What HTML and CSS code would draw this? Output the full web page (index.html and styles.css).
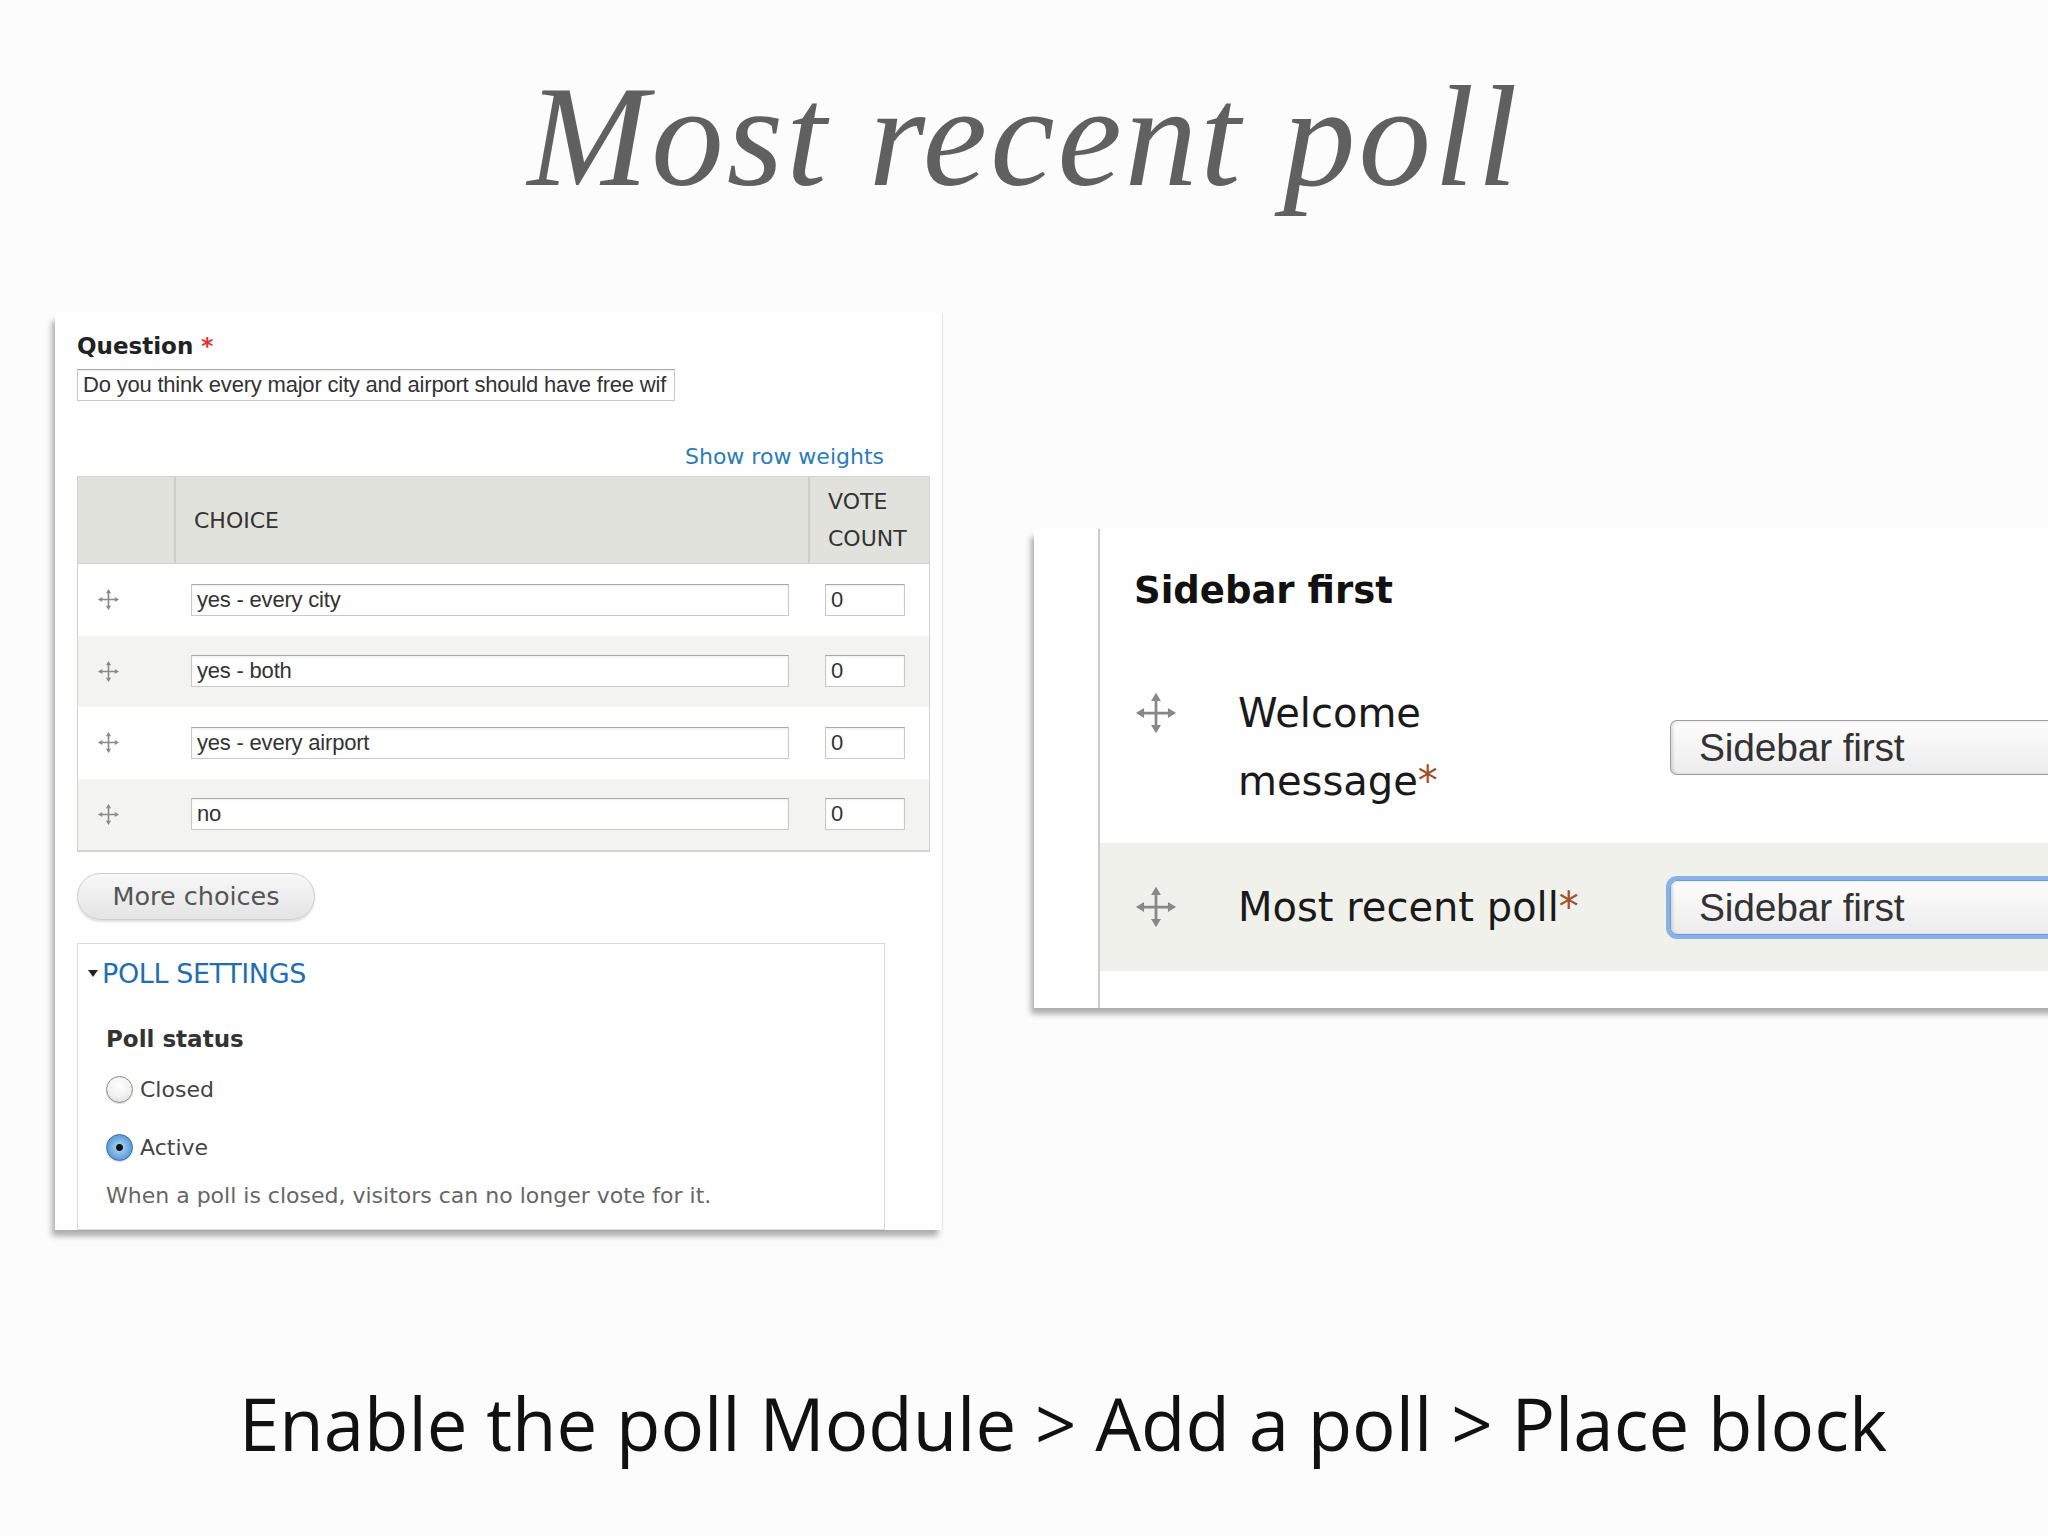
FILE: index.html
```html
<!DOCTYPE html>
<html lang="en">
<head>
<meta charset="utf-8">
<title>Most recent poll</title>
<link rel="stylesheet" href="styles.css">
</head>
<body>
<div class="slide">
  <h1 class="title">Most recent poll</h1>

  <div class="stage">
    <section class="poll-form">
      <div class="field">
        <div class="field-label">Question <span class="req">*</span></div>
        <div class="text-input question-input">Do you think every major city and airport should have free wif</div>
      </div>

      <div class="weights-link">Show row weights</div>

      <div class="choices">
        <div class="choices-head">
          <div class="head-cell"></div>
          <div class="head-cell choice-head">CHOICE</div>
          <div class="head-cell vote-head">VOTE<br>COUNT</div>
        </div>
        <div class="choice-row">
          <div class="drag-cell"><svg class="drag-icon" viewBox="0 0 24 24"><path d="M12 4v16M4 12h16"/><polygon points="12,1 9.3,5.5 14.7,5.5"/><polygon points="12,23 9.3,18.5 14.7,18.5"/><polygon points="1,12 5.5,9.3 5.5,14.7"/><polygon points="23,12 18.5,9.3 18.5,14.7"/></svg></div>
          <div class="choice-cell"><div class="text-input choice-input">yes - every city</div></div>
          <div class="vote-cell"><div class="text-input vote-input">0</div></div>
        </div>
        <div class="choice-row alt">
          <div class="drag-cell"><svg class="drag-icon" viewBox="0 0 24 24"><path d="M12 4v16M4 12h16"/><polygon points="12,1 9.3,5.5 14.7,5.5"/><polygon points="12,23 9.3,18.5 14.7,18.5"/><polygon points="1,12 5.5,9.3 5.5,14.7"/><polygon points="23,12 18.5,9.3 18.5,14.7"/></svg></div>
          <div class="choice-cell"><div class="text-input choice-input">yes - both</div></div>
          <div class="vote-cell"><div class="text-input vote-input">0</div></div>
        </div>
        <div class="choice-row">
          <div class="drag-cell"><svg class="drag-icon" viewBox="0 0 24 24"><path d="M12 4v16M4 12h16"/><polygon points="12,1 9.3,5.5 14.7,5.5"/><polygon points="12,23 9.3,18.5 14.7,18.5"/><polygon points="1,12 5.5,9.3 5.5,14.7"/><polygon points="23,12 18.5,9.3 18.5,14.7"/></svg></div>
          <div class="choice-cell"><div class="text-input choice-input">yes - every airport</div></div>
          <div class="vote-cell"><div class="text-input vote-input">0</div></div>
        </div>
        <div class="choice-row alt">
          <div class="drag-cell"><svg class="drag-icon" viewBox="0 0 24 24"><path d="M12 4v16M4 12h16"/><polygon points="12,1 9.3,5.5 14.7,5.5"/><polygon points="12,23 9.3,18.5 14.7,18.5"/><polygon points="1,12 5.5,9.3 5.5,14.7"/><polygon points="23,12 18.5,9.3 18.5,14.7"/></svg></div>
          <div class="choice-cell"><div class="text-input choice-input">no</div></div>
          <div class="vote-cell"><div class="text-input vote-input">0</div></div>
        </div>
      </div>

      <div class="more-btn">More choices</div>

      <div class="settings">
        <div class="settings-legend"><span class="caret"></span>POLL SETTINGS</div>
        <div class="settings-body">
          <div class="status-label">Poll status</div>
          <div class="radio-line"><span class="radio"></span>Closed</div>
          <div class="radio-line"><span class="radio checked"></span>Active</div>
          <div class="description">When a poll is closed, visitors can no longer vote for it.</div>
        </div>
      </div>
    </section>

    <section class="blocks">
      <div class="blocks-gutter"></div>
      <div class="blocks-main">
        <div class="region-title">Sidebar first</div>
        <div class="block-row welcome-row">
          <div class="block-name">
            <svg class="drag-icon big" viewBox="0 0 24 24"><path d="M12 4v16M4 12h16"/><polygon points="12,1 9.3,5.5 14.7,5.5"/><polygon points="12,23 9.3,18.5 14.7,18.5"/><polygon points="1,12 5.5,9.3 5.5,14.7"/><polygon points="23,12 18.5,9.3 18.5,14.7"/></svg>
            <span class="block-label">Welcome message<span class="star">*</span></span>
          </div>
          <div class="select">Sidebar first</div>
        </div>
        <div class="block-row poll-row">
          <div class="block-name">
            <svg class="drag-icon big" viewBox="0 0 24 24"><path d="M12 4v16M4 12h16"/><polygon points="12,1 9.3,5.5 14.7,5.5"/><polygon points="12,23 9.3,18.5 14.7,18.5"/><polygon points="1,12 5.5,9.3 5.5,14.7"/><polygon points="23,12 18.5,9.3 18.5,14.7"/></svg>
            <span class="block-label">Most recent poll<span class="star">*</span></span>
          </div>
          <div class="select focused">Sidebar first</div>
        </div>
      </div>
    </section>
  </div>

  <p class="caption">Enable the poll Module &gt; Add a poll &gt; Place block</p>
</div>
</body>
</html>
```

FILE: styles.css
```css
* { box-sizing: border-box; }

html, body {
  margin: 0;
  padding: 0;
}

body {
  width: 2048px;
  height: 1536px;
  overflow: hidden;
  background: #fcfcfc;
}

.slide {
  display: flex;
  flex-direction: column;
  width: 2048px;
  height: 1536px;
}

.title {
  margin: 0;
  padding-top: 64px;
  font-family: "Liberation Serif", "Times New Roman", serif;
  font-style: italic;
  font-weight: normal;
  font-size: 145px;
  line-height: 145px;
  letter-spacing: 3px;
  color: #606060;
  text-align: center;
}

.stage {
  display: flex;
  align-items: flex-start;
  margin-top: 104px;
  padding-left: 55px;
  height: 917px;
}

/* ---------- left panel: poll form ---------- */
.poll-form {
  flex: 0 0 888px;
  height: 917px;
  overflow: hidden;
  display: flex;
  flex-direction: column;
  padding: 21px 13px 0 22px;
  background: #fefefe;
  border-right: 1px solid #e6e6e6;
  box-shadow: -4px 7px 6px -1px rgba(0, 0, 0, 0.32);
  font-family: "DejaVu Sans", "Liberation Sans", sans-serif;
  color: #333;
}

.field {
  display: flex;
  flex-direction: column;
  gap: 11px;
}

.field-label {
  font-weight: bold;
  font-size: 23px;
  line-height: 24px;
  color: #222;
}

.req { color: #d33; }

.text-input {
  background: #fff;
  border: 1px solid #c9c9c9;
  border-top-color: #a9a9a9;
  box-shadow: inset 0 1px 2px rgba(0, 0, 0, 0.08);
  font-family: "Liberation Sans", Arial, sans-serif;
  font-size: 22px;
  letter-spacing: -0.2px;
  color: #333;
  padding: 0 5px;
  white-space: nowrap;
  overflow: hidden;
}

.question-input {
  width: 598px;
  height: 32px;
  line-height: 30px;
}

.weights-link {
  align-self: flex-end;
  margin: 44px 45px 7px 0;
  font-size: 22px;
  line-height: 24px;
  color: #2a7cb8;
}

.choices {
  width: 853px;
  border: 1px solid #d2d3cd;
  border-bottom-width: 2px;
}

.choices-head,
.choice-row {
  display: grid;
  grid-template-columns: 96px 634px 1fr;
}

.choices-head {
  height: 87px;
  background: #e1e2dc;
  border-bottom: 1px solid #d2d3cd;
  font-size: 22px;
  color: #333;
}

.head-cell {
  display: flex;
  align-items: center;
  padding-left: 18px;
}

.head-cell + .head-cell { border-left: 2px solid #cecfc9; }

.vote-head {
  line-height: 37px;
  padding-left: 18px;
}

.choice-row {
  height: 71.5px;
  background: #fff;
}

.choice-row.alt { background: #f3f4ef; }

.drag-cell,
.choice-cell,
.vote-cell {
  display: flex;
  align-items: center;
}

.drag-cell { padding-left: 19px; }

.choice-cell { padding-left: 17px; }
.vote-cell { padding-left: 17px; }

.choice-input,
.vote-input {
  height: 32px;
  line-height: 30px;
}

.choice-input { width: 598px; }
.vote-input { width: 80px; }

.drag-icon {
  width: 23px;
  height: 23px;
  fill: #8a8a8a;
  stroke: #8a8a8a;
  stroke-width: 1.7;
}

.drag-icon polygon { stroke: none; }

.drag-icon.big {
  width: 44px;
  height: 44px;
  stroke-width: 1.5;
  fill: #888;
  stroke: #888;
}

.more-btn {
  align-self: flex-start;
  margin-top: 21px;
  height: 47px;
  width: 238px;
  border: 1px solid #cdcdcd;
  border-radius: 24px;
  background: linear-gradient(#f8f8f8, #e4e4e4);
  box-shadow: 0 2px 2px rgba(0, 0, 0, 0.12);
  font-size: 25.5px;
  line-height: 45px;
  color: #555;
  text-align: center;
}

.settings {
  margin-top: 23px;
  width: 808px;
  height: 320px;
  border: 1px solid #dadada;
  background: #fff;
}

.settings-legend {
  display: flex;
  align-items: center;
  height: 58px;
  padding-left: 10px;
  font-size: 27px;
  color: #1f6fb0;
  letter-spacing: -0.4px;
}

.caret {
  width: 0;
  height: 0;
  border-left: 5px solid transparent;
  border-right: 5px solid transparent;
  border-top: 7px solid #222;
  margin-right: 4px;
}

.settings-body {
  display: flex;
  flex-direction: column;
  padding: 22px 0 0 28px;
}

.status-label {
  font-weight: bold;
  font-size: 23px;
  line-height: 30px;
  color: #333;
}

.radio-line {
  display: flex;
  align-items: center;
  gap: 7px;
  font-size: 22px;
  color: #444;
  height: 30px;
}

.status-label + .radio-line { margin-top: 20px; }
.radio-line + .radio-line { margin-top: 28px; }

.radio {
  width: 27px;
  height: 27px;
  border-radius: 50%;
  border: 1px solid #8a8a8a;
  background: radial-gradient(circle at 50% 35%, #ffffff 0%, #f1f1f1 55%, #cfcfcf 100%);
  box-shadow: 0 1px 1px rgba(0, 0, 0, 0.15);
}

.radio.checked {
  border-color: #3a6fa8;
  background: radial-gradient(circle, #111 0 3px, #9cc9f0 4px, #5a9ad8 70%, #3b78bf 100%);
}

.description {
  margin-top: 21px;
  font-size: 22px;
  line-height: 26px;
  color: #666;
}

/* ---------- right panel: block layout ---------- */
.blocks {
  flex: 0 0 1100px;
  display: flex;
  height: 479px;
  margin-top: 216px;
  margin-left: 91px;
  background: #fefefe;
  box-shadow: -4px 7px 6px -1px rgba(0, 0, 0, 0.32);
  font-family: "DejaVu Sans", "Liberation Sans", sans-serif;
}

.blocks-gutter {
  flex: 0 0 64px;
}

.blocks-main {
  flex: 1;
  border-left: 2px solid #cbcbcb;
  display: flex;
  flex-direction: column;
  padding-top: 38px;
}

.region-title {
  padding-left: 34px;
  font-weight: bold;
  font-size: 37px;
  line-height: 48px;
  color: #111;
}

.block-row {
  display: grid;
  grid-template-columns: 536px 1fr;
  align-items: center;
  padding-left: 34px;
}

.welcome-row {
  height: 192px;
  margin-top: 36px;
}

.poll-row {
  height: 128px;
  background: #f1f1ec;
}

.block-name {
  display: flex;
  align-items: flex-start;
  gap: 60px;
}

.block-name .drag-icon { margin-top: 12px; flex: 0 0 44px; }

.block-label {
  max-width: 370px;
  font-size: 40px;
  line-height: 68px;
  color: #1a1a1a;
}

.star { color: #a0522d; }

.select {
  height: 55px;
  border: 1px solid #9d9d9d;
  border-right: none;
  border-radius: 7px 0 0 7px;
  background: linear-gradient(#fdfdfd, #ececec);
  box-shadow: inset 2px 0 3px rgba(0, 0, 0, 0.12);
  padding-left: 28px;
  font-family: "Liberation Sans", Arial, sans-serif;
  font-size: 39px;
  line-height: 53px;
  color: #333;
  letter-spacing: -0.2px;
}

.select.focused {
  border-color: #6a9bd4;
  box-shadow: 0 0 0 4px #86b3e3, inset 2px 0 3px rgba(0, 0, 0, 0.12);
}

/* ---------- caption ---------- */
.caption {
  margin: 157px 0 0;
  padding-left: 78px;
  font-family: "Open Sans", "DejaVu Sans", sans-serif;
  font-size: 72.5px;
  line-height: 73px;
  color: #111;
  text-align: center;
}
```
